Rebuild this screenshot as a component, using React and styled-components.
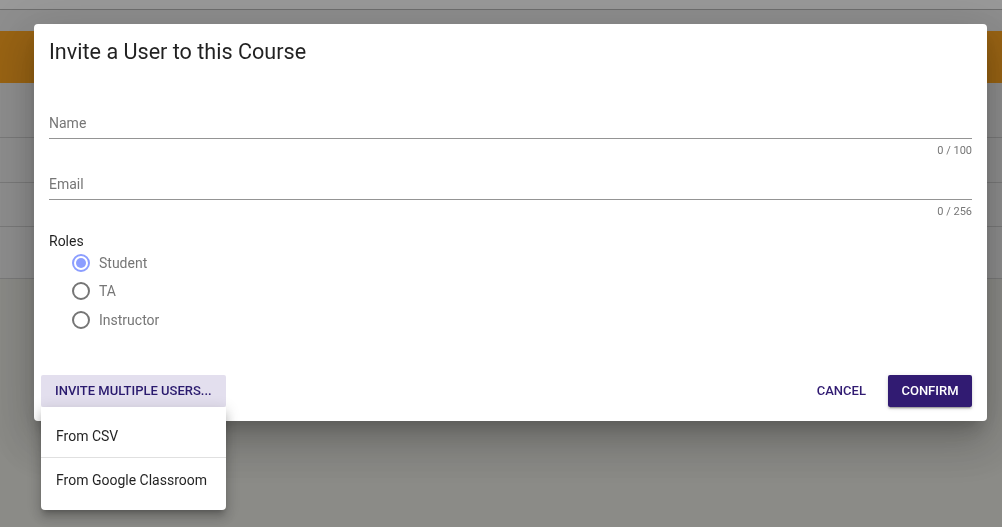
import React from 'react'
import styled, { createGlobalStyle } from 'styled-components'

const GlobalStyle = createGlobalStyle`
    html, body {
        margin: 0;
        height: 100%;
        overflow: hidden;
        font-family: Roboto, "Noto Sans", sans-serif;
    }
    #root {
        height: 100%;
    }
`

// the page behind the dialog
const Page = styled.div`
    height: 100%;
    display: flex;
    flex-direction: column;
    background: #e5e5de;
`
const TopBar = styled.div`
    height: 9px;
    background: #ffffff;
    border-bottom: 1px solid #afafaf;
`
const SubBar = styled.div`
    height: 21px;
    background: #ebebeb;
`
const Banner = styled.div`
    height: 52px;
    background: #ff9d0a;
`
const Row = styled.div`
    height: ${p => p.h}px;
    background: #ebebeb;
    border-bottom: 1px solid #c6c6c6;
`

const Overlay = styled.div`
    position: fixed;
    inset: 0;
    background: rgba(33, 33, 33, 0.46);
    padding: 24px 0 0 34px;
`

const Dialog = styled.div`
    width: 953px;
    height: 397px;
    background: #fff;
    border-radius: 4px;
    box-shadow: 0 11px 15px -7px rgba(0,0,0,.2), 0 24px 38px 3px rgba(0,0,0,.14), 0 9px 46px 8px rgba(0,0,0,.12);
    display: flex;
    flex-direction: column;
`
const Title = styled.h2`
    margin: 0;
    padding: 17px 15px 0;
    font-size: 21.6px;
    font-weight: 400;
    line-height: 22px;
    color: rgba(0, 0, 0, 0.87);
`
const Form = styled.div`
    padding: 44px 15px 0;
`
const Field = styled.div`
    display: flex;
    flex-direction: column;
`
const InputRow = styled.div`
    height: 31px;
    display: flex;
    align-items: center;
    border-bottom: 1px solid #949494;
    font-size: 14px;
    color: #767676;
`
const Counter = styled.div`
    margin-top: 5px;
    height: 24px;
    line-height: 14px;
    font-size: 11px;
    color: #767676;
    text-align: right;
`
const GroupLabel = styled.div`
    margin-top: 5px;
    font-size: 14px;
    line-height: 15px;
    color: rgba(0, 0, 0, 0.87);
`
const RadioList = styled.div`
    display: flex;
    flex-direction: column;
    padding-left: 23px;
`
const RadioRow = styled.label`
    height: ${p => p.h}px;
    display: flex;
    align-items: center;
    gap: 9px;
    font-size: 14px;
    color: #767676;
`
const Circle = styled.span`
    width: 14px;
    height: 14px;
    border-radius: 50%;
    border: 2px solid ${p => (p.checked ? '#8c9eff' : '#757575')};
    display: flex;
    align-items: center;
    justify-content: center;
    &::after {
        content: '';
        width: 10px;
        height: 10px;
        border-radius: 50%;
        background: ${p => (p.checked ? '#8c9eff' : 'transparent')};
    }
`

const Actions = styled.div`
    margin-top: auto;
    padding: 0 15px 14px 7px;
    display: flex;
    align-items: center;
`
const Button = styled.button`
    height: 32px;
    border: none;
    border-radius: 2px;
    padding: 0 ${p => p.pad || 14}px 1px;
    font-family: Roboto, sans-serif;
    font-size: 13px;
    font-weight: 500;
    letter-spacing: 0;
    text-transform: uppercase;
    cursor: pointer;
    background: ${p => p.bg || 'transparent'};
    color: ${p => p.fg || '#311b72'};
    box-shadow: ${p => (p.raised ? '0 3px 1px -2px rgba(0,0,0,.2), 0 2px 2px 0 rgba(0,0,0,.14), 0 1px 5px 0 rgba(0,0,0,.12)' : 'none')};
`
const Spacer = styled.div`
    flex: 1;
`
const MenuAnchor = styled.div`
    position: relative;
    display: flex;
`
const Menu = styled.div`
    position: absolute;
    top: 32px;
    left: 0;
    width: 185px;
    padding: 7px 0 9px;
    background: #fff;
    border-radius: 0 0 4px 4px;
    box-shadow: 0 5px 5px -3px rgba(0,0,0,.2), 0 8px 10px 1px rgba(0,0,0,.14), 0 3px 14px 2px rgba(0,0,0,.12);
    z-index: 2;
`
const MenuItem = styled.div`
    height: 43px;
    display: flex;
    align-items: center;
    padding-left: 15px;
    font-size: 14px;
    color: rgba(0, 0, 0, 0.87);
    & + & {
        border-top: 1px solid #e0e0e0;
    }
`

const roles = [
    { label: 'Student', checked: true, h: 28 },
    { label: 'TA', checked: false, h: 28 },
    { label: 'Instructor', checked: false, h: 29 },
]

export default function App() {
    return (
        <>
            <GlobalStyle />
            <Page>
                <TopBar />
                <SubBar />
                <Banner />
                <Row h={54} />
                <Row h={44} />
                <Row h={43} />
                <Row h={51} />
            </Page>
            <Overlay>
                <Dialog>
                    <Title>Invite a User to this Course</Title>
                    <Form>
                        <Field>
                            <InputRow>Name</InputRow>
                            <Counter>0 / 100</Counter>
                        </Field>
                        <Field>
                            <InputRow>Email</InputRow>
                            <Counter>0 / 256</Counter>
                        </Field>
                        <GroupLabel>Roles</GroupLabel>
                        <RadioList>
                            {roles.map(r => (
                                <RadioRow key={r.label} h={r.h}>
                                    <Circle checked={r.checked} />
                                    {r.label}
                                </RadioRow>
                            ))}
                        </RadioList>
                    </Form>
                    <Actions>
                        <MenuAnchor>
                            <Button bg="#e3dfee" fg="#2a1a6e" pad={14}>Invite multiple users...</Button>
                            <Menu>
                                <MenuItem>From CSV</MenuItem>
                                <MenuItem>From Google Classroom</MenuItem>
                            </Menu>
                        </MenuAnchor>
                        <Spacer />
                        <Button>Cancel</Button>
                        <Button bg="#311b72" fg="#fff" pad={13.5} raised style={{ marginLeft: 8 }}>Confirm</Button>
                    </Actions>
                </Dialog>
            </Overlay>
        </>
    )
}
